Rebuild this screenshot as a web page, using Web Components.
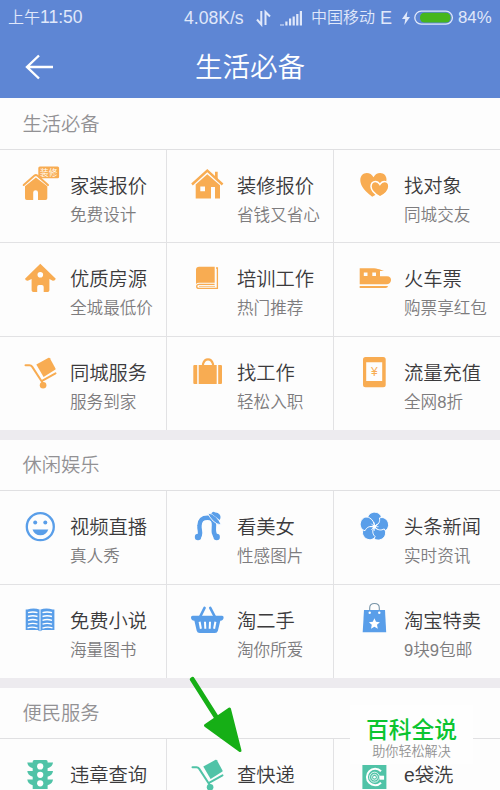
<!DOCTYPE html>
<html lang="zh-CN">
<head>
<meta charset="utf-8">
<title>生活必备</title>
<style>
html,body{margin:0;padding:0}
body{width:500px;height:790px;overflow:hidden;background:#fdfdfd;font-family:"Liberation Sans","Noto Sans CJK SC",sans-serif;color:#3b3a3c}
</style>
</head>
<body>
<life-app></life-app>
<script>
const define = (name, html, setup) => {
  const t = document.createElement('template');
  t.innerHTML = html;
  customElements.define(name, class extends HTMLElement {
    constructor() {
      super();
      this.attachShadow({mode: 'open'}).append(t.content.cloneNode(true));
    }
    connectedCallback() { if (setup) setup(this, this.shadowRoot); }
  });
};

const trolley = `<path d="M5.5 12.2h4q1.6 0 2.6 1.4L21.6 28.2 35.5 20.4M21.8 28l1.2 4" fill="none" stroke="currentColor" stroke-width="2" stroke-linecap="round" stroke-linejoin="round"/><path d="M16.3 11.6 28.6 4.8q.8-.4 1.3.4l5.6 10.3q.4.8-.4 1.3L23.6 23.9z" fill="currentColor"/><circle cx="23.1" cy="32.2" r="3.3"/>`;
const petal = [0,72,144,216,288].map(a => `<g transform="rotate(${a} 20.3 19.7)"><path d="M20.3 19.7C19.7 14.5 17 12.5 13.6 12.1C13.4 7.8 17 5.2 20.6 5.2C25 5.2 28.3 8.7 27.2 12.7C26.4 16.4 23.6 18.8 20.3 19.7Z" stroke="#fff" stroke-width=".9"/></g>`).join('');
const icons = {
  quote: `<path d="M3.7 19 14.5 9.6q1.4-1 2.8 0L28 19" fill="none" stroke="currentColor" stroke-width="2" stroke-linecap="round"/><path d="M5 20.2 15.9 11.4 27.3 20.2V32.2q0 1.8-1.8 1.8H18V26.5q0-2.2-2.4-2.2t-2.4 2.2V34H6.8Q5 34 5 32.2z"/><rect x="18.3" y=".5" width="20.8" height="11.8" rx="1.5"/><text x="28.7" y="9.7" font-size="8.6" text-anchor="middle" fill="#fff">装修</text>`,
  house: `<path d="M5 18.5 20.3 4.7 35.6 18.5" fill="none" stroke="currentColor" stroke-width="2.4"/><path d="M28 5.7h2.7v8L28 11zM8.7 18.6 20.3 8.2 33 19.2V32.4h-5V21h-4v11.4H8.7zM13.3 20.6v4.6h4.7v-4.6z" fill-rule="evenodd"/>`,
  hearts: `<path d="M18.2 30.7C8.3 23.5 6.2 18 6.3 13.5 6.5 9.8 9.3 7 12.7 7q4.5 0 6.8 4.3Q21.7 7 26.2 7c3.6 0 6.3 2.8 6.3 6.4 0 6-5.6 12.8-14.3 17.3z"/><path d="M26 31C18.2 26.7 17 23.3 17 20.6c0-3.1 1.8-5.2 4.4-5.2 2.2 0 3.5 1.3 4.5 3 1-1.7 2.4-3 4.5-3 2.6 0 4.5 2.1 4.5 4.8 0 4.2-4 8.2-8.9 10.8z" stroke="#fff" stroke-width="1.5"/>`,
  nest: `<path d="M20.3 4.8 35.8 19.7q-.7 2.2-3 2L29.4 20v11.3q0 1.7-1.7 1.7h-4V28q0-2-1.8-2H19q-1.8 0-1.8 2v5h-3.8q-1.8 0-1.8-1.7V20l-3.8 1.7q-2.4.1-2.8-2z"/><circle cx="20.3" cy="15.7" r="2.8" fill="#fff"/>`,
  book: `<path d="M12.2 7.7h15.5v16H12q-1.5 0-3 1.2V10.6q0-2.9 3.2-2.9z"/><path d="M29 9h1.4v20.4H12.2q-2.500 0-2.500-2t2.500-2h15.400" fill="none" stroke="currentColor" stroke-width="1.3"/><path d="M12 27.4h16" stroke="currentColor" stroke-width=".7"/>`,
  train: `<path d="M5.7 9.2H18c6 0 9.6 1.8 12.2 2.900H26V17.300h7c2.800 0 4.300 1.900 4 4-.3 2.500-2 4-4.500 4H5.700zM9.800 13.400v3.700h3.700v-3.700zM18.300 13.400v3.700H22v-3.700z" fill-rule="evenodd"/><path d="M5.700 27.100H34q-.3 1.900-2.300 1.900h-26z"/>`,
  trolley,
  suitcase: `<path d="M16 12.5V11q1.4-4.700 5-4.700T26 11v1.500" fill="none" stroke="currentColor" stroke-width="2.2"/><path d="M11.700 12h18v19h-18zM10.200 12v19H7.400q-1.100 0-1.100-1.100V13.100q0-1.100 1.100-1.100zM31.200 12v19h2.700q1.100 0 1.100-1.100V13.100q0-1.100-1.100-1.100z"/>`,
  phone: `<path d="M11.5 4h17.700q2.500 0 2.500 2.500v25.300q0 2.500-2.500 2.500H11.500Q9 34.300 9 31.800V6.500Q9 4 11.500 4zm.7 5.300V28h16V9.300z" fill-rule="evenodd"/><text x="20.3" y="22.8" font-size="12" text-anchor="middle">¥</text>`,
  smile: `<circle cx="20.3" cy="19.7" r="13.5" fill="none" stroke="currentColor" stroke-width="2.3"/><circle cx="15.2" cy="15.6" r="2"/><circle cx="25.3" cy="15.6" r="2"/><path d="M12.500 22.500h15.800q-2 5.800-7.900 5.800t-7.900-5.800z"/>`,
  lady: `<path d="M11 30C15.500 27.800 11.800 23.500 12.500 18.500 12.800 13 15.200 10.800 20.500 10.800 25.500 10.800 27.300 13.800 27 18.500 26.700 23.500 26 27.700 29.700 30" fill="none" stroke="currentColor" stroke-width="4.400"/><circle cx="11" cy="30" r="3.200"/><circle cx="29.700" cy="30" r="3.200"/><path d="M20.700 6.200q4.300-.2 8 3.500 3.700 3.400 5.600 8-4.300.2-8.200-3.700-4-4.300-5.400-7.800z" stroke="#fff" stroke-width=".9"/><path d="M24.300 6.400q1.700-2.600 3.800-.9 2.800-.2 4.500 2 1.800 2.300.1 5.500z"/>`,
  flower: petal + `<g stroke="#fff" stroke-width=".8"><path d="M20.300 15.500v8.400M16.100 19.700h8.400M17.300 16.700l6 6M23.300 16.700l-6 6"/></g><circle cx="20.300" cy="19.700" r="1.900" fill="#fff"/>`,
  reader: `<path d="M5.700 8.600h1.600Q13.700 6.200 20 8.700 26.300 6.200 32.700 8.600h1.700v20.500h-12Q20 31.200 17.700 29.100h-12z"/><path d="M20 8.700v21" stroke="#fff" stroke-width="1"/><g fill="none" stroke="#fff" stroke-width="1.400"><path d="M8 11.700q5-1.500 9.500 0M8 15.500q5-1.500 9.500 0M8 19.300q5-1.500 9.500 0M8 23.100q5-1.500 9.500 0M7.500 26.800q5-1.500 10 .3M22.500 11.700q4.500-1.500 9.500 0M22.500 15.500q4.500-1.500 9.500 0M22.500 19.300q4.500-1.500 9.500 0M22.500 23.100q4.500-1.500 9.500 0M22.500 27.100q5-1.800 10-.3"/></g>`,
  basket: `<path d="M13 16 17.500 7M28 16 23.300 7" stroke="currentColor" stroke-width="2.700" stroke-linecap="round"/><path d="M5.600 14.700h29.500q1.500 0 1.500 1.600 0 3.400-3.300 3.400l-2.400 10q-.6 2.300-3 2.300H12.700q-2.400 0-3-2.300l-2.300-10q-3.400 0-3.400-3.400 0-1.600 1.600-1.600z"/><path d="M12.600 20.700l1.300 7M18 20.700l.3 7M23 20.700l-.3 7M28.400 20.700l-1.300 7" stroke="#fff" stroke-width="2"/>`,
  bag: `<path d="M15.700 12V7q0-4.500 4.800-4.500T25.300 7v5" fill="none" stroke="#7894a8" stroke-width="1.100"/><path d="M10 9h21l1.200 22.300H8.700z"/><circle cx="15.700" cy="11.700" r="1.200" fill="#fff"/><circle cx="25.300" cy="11.700" r="1.200" fill="#fff"/><path d="m20.400 17.200 1.600 3.600 3.900.4-2.900 2.600.8 3.900-3.400-2-3.400 2 .8-3.900-2.900-2.600 3.900-.4z" fill="#fff"/>`,
  lights: `<path d="M14.300 4.900h11.800q1.500 0 1.500 1.500v1.200H33q-.2 4-5.400 5.600v2.900H33q-.2 4-5.400 5.600v2.900H33q-.2 4-5.400 5.600V34H12.700v-3.800q-5.200-1.600-5.400-5.600h5.400v-2.900q-5.200-1.600-5.400-5.600h5.400v-2.900Q7.500 11.600 7.300 7.600h5.400V6.400q0-1.500 1.600-1.500z"/><circle cx="20.200" cy="11.400" r="3.100" fill="#fff"/><circle cx="20.200" cy="19.800" r="3.100" fill="#fff"/><circle cx="20.200" cy="28.300" r="3.100" fill="#fff"/>`,
  washer: `<path d="M8.400 10h24v24h-24z"/><path d="M27 16.300a8.200 8.200 0 1 0 0 11.400" fill="none" stroke="#fff" stroke-width="2"/><circle cx="20.500" cy="22.200" r="5" fill="none" stroke="#fff" stroke-width=".8"/><circle cx="20.500" cy="22.200" r="2.900" fill="none" stroke="#fff" stroke-width=".8"/><circle cx="20.500" cy="22.200" r="1.300" fill="#fff"/><path d="M25.800 20.700h4.300v4h-4.300z" fill="#fff"/>`
};

define('service-icon', `<style>:host{display:block;width:40px;height:40px;color:var(--tint)}svg{display:block;fill:currentColor;overflow:visible}</style><svg width="40" height="40" viewBox="0 0 40 40"></svg>`,
  (el, root) => { root.querySelector('svg').innerHTML = icons[el.getAttribute('name')]; });

define('service-cell', `<style>
:host{display:grid;grid-template-columns:40px 1fr;column-gap:10px;align-items:start;padding:16px 0 0 20px;box-sizing:border-box;border-right:1px solid #e2e2e4;border-bottom:1px solid #e2e2e4;white-space:nowrap;min-width:0}
:host(:nth-child(3n)){border-right:0}
:host(.last){border-bottom:0}
.t{font-size:19.3px;line-height:28px;margin-top:7px}
.s{font-size:16.600px;line-height:24px;margin-top:3px;color:#7d7c7e}
</style><div class="i"></div><div><div class="t"><slot></slot></div><div class="s"><slot name="note"></slot></div></div>`,
  (el, root) => { root.querySelector('.i').innerHTML = `<service-icon name="${el.getAttribute('icon')}"></service-icon>`; });

define('service-section', `<style>
:host{display:block;border-bottom:10px solid #edebef;background:#fdfdfd}
h2{margin:0;box-sizing:border-box;height:var(--head,51px);padding:var(--pad,12px) 0 0 22.500px;border-bottom:1px solid #e0e0e2;font-size:19.300px;font-weight:350;line-height:28px;color:#929194}
.g{display:grid;grid-template-columns:167px 167px 166px;grid-template-rows:var(--rows)}
</style><h2></h2><div class="g"><slot></slot></div>`,
  (el, root) => { root.querySelector('h2').textContent = el.getAttribute('heading'); });

define('status-bar', `<style>
:host{display:grid;grid-template-columns:176px 72px 24px 31px 69px 22px 12px 44px 40px;height:35px;padding-left:8px;align-items:center;font-size:16px;color:#e0e8fa;white-space:nowrap}
svg{display:block}span{line-height:24px}
.n{font-size:17.500px}
</style>
<span>上午<span class="n">11:50</span></span><span style="font-size:17.600px">4.08K/s</span>
<svg width="18" height="18" viewBox="0 0 18 18" fill="none" stroke="currentColor" stroke-width="2"><path d="M5.300 2v13.500L1 10.500M9.500 16V3L14 7.500"/></svg>
<svg width="24" height="18" viewBox="0 0 24 18" fill="currentColor"><path d="M0 15.500h4v1H0zM5.300 12.500h2.200v4H5.300zM9 9.500h2.200v7H9zM12.600 7.500h2.200v9h-2.200zM16.200 5h2.200v11.500h-2.200zM19.800 2H22v14.500h-2.200z"/></svg>
<span>中国移动</span><span style="font-size:18px">E</span>
<svg width="10" height="18" viewBox="0 0 10 18" fill="currentColor"><path d="M5.500 2 0 10h3.300l-1 6L8 8H4.700z"/></svg>
<svg width="40" height="16" viewBox="0 0 40 16"><rect x=".8" y="1.200" width="37.600" height="13" rx="6.500" fill="none" stroke="currentColor" stroke-width="1.300"/><rect x="6" y="2.800" width="30.500" height="9.800" rx="4.500" fill="#46b61c"/></svg>
<span style="font-size:16.800px">84%</span>`);

define('nav-header', `<style>
:host{display:grid;grid-template-columns:60px 1fr 60px;align-items:center;height:63px}
h1{font-size:27.500px;line-height:40px;font-weight:350;margin:2px 0 0;color:#fff;text-align:center}svg{display:block;margin-left:25px}
</style><svg width="30" height="28" viewBox="0 0 30 28" fill="none" stroke="#fff" stroke-width="2.400"><path d="M28 14H2M14 2.500 2 14 14 25.500"/></svg><h1><slot></slot></h1>`);

define('pointer-arrow', `<style>:host{position:absolute;left:185px;top:670px}svg{display:block}</style>
<svg width="62" height="88" viewBox="0 0 62 88"><path d="M7.400 9.500 35 53" stroke="#16af16" stroke-width="5" stroke-linecap="round"/><path d="M20.500 55.500 44.500 39 55 80.500z" fill="#16af16" stroke="#16af16" stroke-width="3" stroke-linejoin="round"/></svg>`);

define('site-badge', `<style>
:host{position:absolute;left:350px;top:705px;width:123px;height:59px;background:#fefefe;text-align:center;white-space:nowrap}
b{display:block;font-size:22.800px;line-height:32px;font-weight:500;color:#0bc530;margin-top:9px}
small{display:block;font-size:13.100px;line-height:18px;color:#929292;margin-top:-3px}
</style><b>百科全说</b><small>助你轻松解决</small>`);

const data = [
  ['生活必备', '#f8ac52', '--head:52px;--pad:13px;--rows:93px 94px 93px', [
    ['quote','家装报价','免费设计'],['house','装修报价','省钱又省心'],['hearts','找对象','同城交友'],
    ['nest','优质房源','全城最低价'],['book','培训工作','热门推荐'],['train','火车票','购票享红包'],
    ['trolley','同城服务','服务到家'],['suitcase','找工作','轻松入职'],['phone','流量充值','全网8折']]],
  ['休闲娱乐', '#599ee9', '--rows:94px 93px', [
    ['smile','视频直播','真人秀'],['lady','看美女','性感图片'],['flower','头条新闻','实时资讯'],
    ['reader','免费小说','海量图书'],['basket','淘二手','淘你所爱'],['bag','淘宝特卖','9块9包邮']]],
  ['便民服务', '#50c3a7', '--rows:94px', [
    ['lights','违章查询',''],['trolley','查快递',''],['washer','e袋洗','']]]
];
define('life-app', `<style>
:host{display:block;position:relative;width:500px;height:790px;overflow:hidden;font-weight:350}
header{background:#5e86d4;height:98px}
</style><header><status-bar></status-bar><nav-header>生活必备</nav-header></header><main></main><pointer-arrow></pointer-arrow><site-badge></site-badge>`,
  (el, root) => {
    root.querySelector('main').innerHTML = data.map(([h, c, v, items]) =>
      `<service-section heading="${h}" style="--tint:${c};${v}">` + items.map(([i, t, s], n) =>
        `<service-cell icon="${i}"${n >= items.length - 3 ? ' class="last"' : ''}>${t}<span slot="note">${s}</span></service-cell>`).join('') + `</service-section>`).join('');
  });
</script>
</body>
</html>
